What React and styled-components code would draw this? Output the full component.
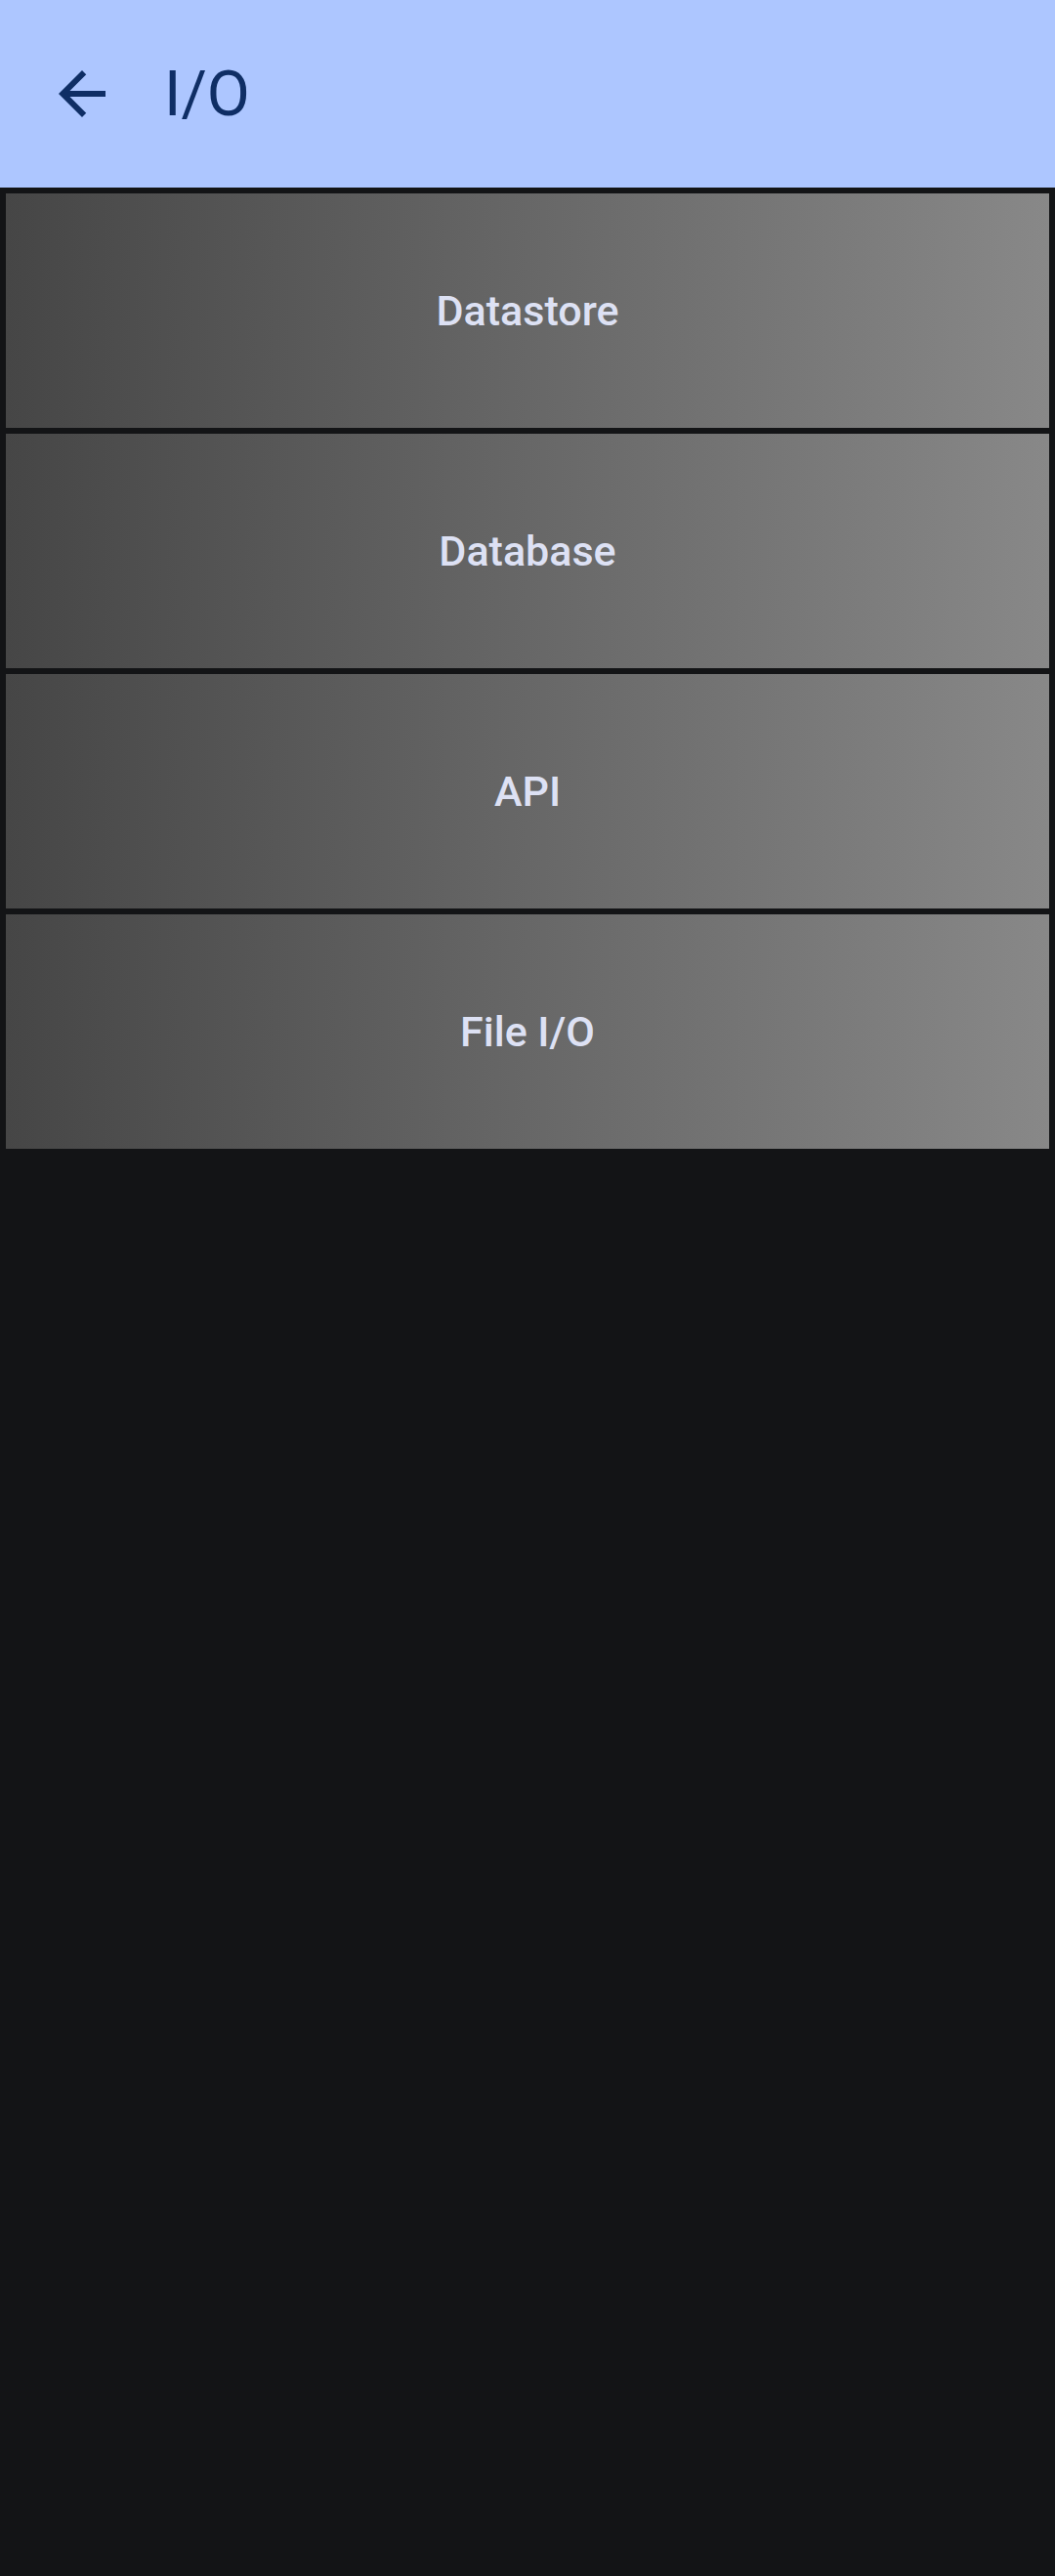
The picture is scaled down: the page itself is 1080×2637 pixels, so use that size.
import React from 'react';
import styled, { createGlobalStyle } from 'styled-components';

const Global = createGlobalStyle`
  html, body {
    margin: 0;
    padding: 0;
    background: #131416;
  }
  #root {
    min-height: 2637px;
    background: #131416;
    font-family: Roboto, "Noto Sans", sans-serif;
  }
`

const TopBar = styled.header`
  height: 192px;
  background: #adc6ff;
  display: flex;
  align-items: center;
  padding-left: 48px;
  box-sizing: border-box;
`

const BackButton = styled.button`
  width: 72px;
  height: 72px;
  padding: 0;
  border: none;
  background: transparent;
  display: flex;
  align-items: center;
  justify-content: center;
  cursor: pointer;
  margin-right: 48px;
`

const Title = styled.h1`
  margin: 0;
  font-size: 64px;
  font-weight: 400;
  color: #0f2e65;
  letter-spacing: 0;
`

const List = styled.div`
  display: flex;
  flex-direction: column;
  gap: 6px;
  padding: 6px 6px 0;
`

const Item = styled.div`
  height: 240px;
  display: flex;
  align-items: center;
  justify-content: center;
  background: linear-gradient(to right, #464646, #888888);
  color: #dde1f4;
  font-size: 43px;
  font-weight: 500;
  cursor: pointer;
`

const items = ['Datastore', 'Database', 'API', 'File I/O']

export default function App() {
  return (
    <>
      <Global />
      <TopBar>
        <BackButton aria-label="back">
          <svg width="72" height="72" viewBox="0 0 24 24">
            <path d="M20 11H7.83l5.59-5.59L12 4l-8 8 8 8 1.41-1.41L7.83 13H20v-2z" fill="#0f2e65" />
          </svg>
        </BackButton>
        <Title>I/O</Title>
      </TopBar>
      <List>
        {items.map((name) => (
          <Item key={name}>{name}</Item>
        ))}
      </List>
    </>
  )
}
